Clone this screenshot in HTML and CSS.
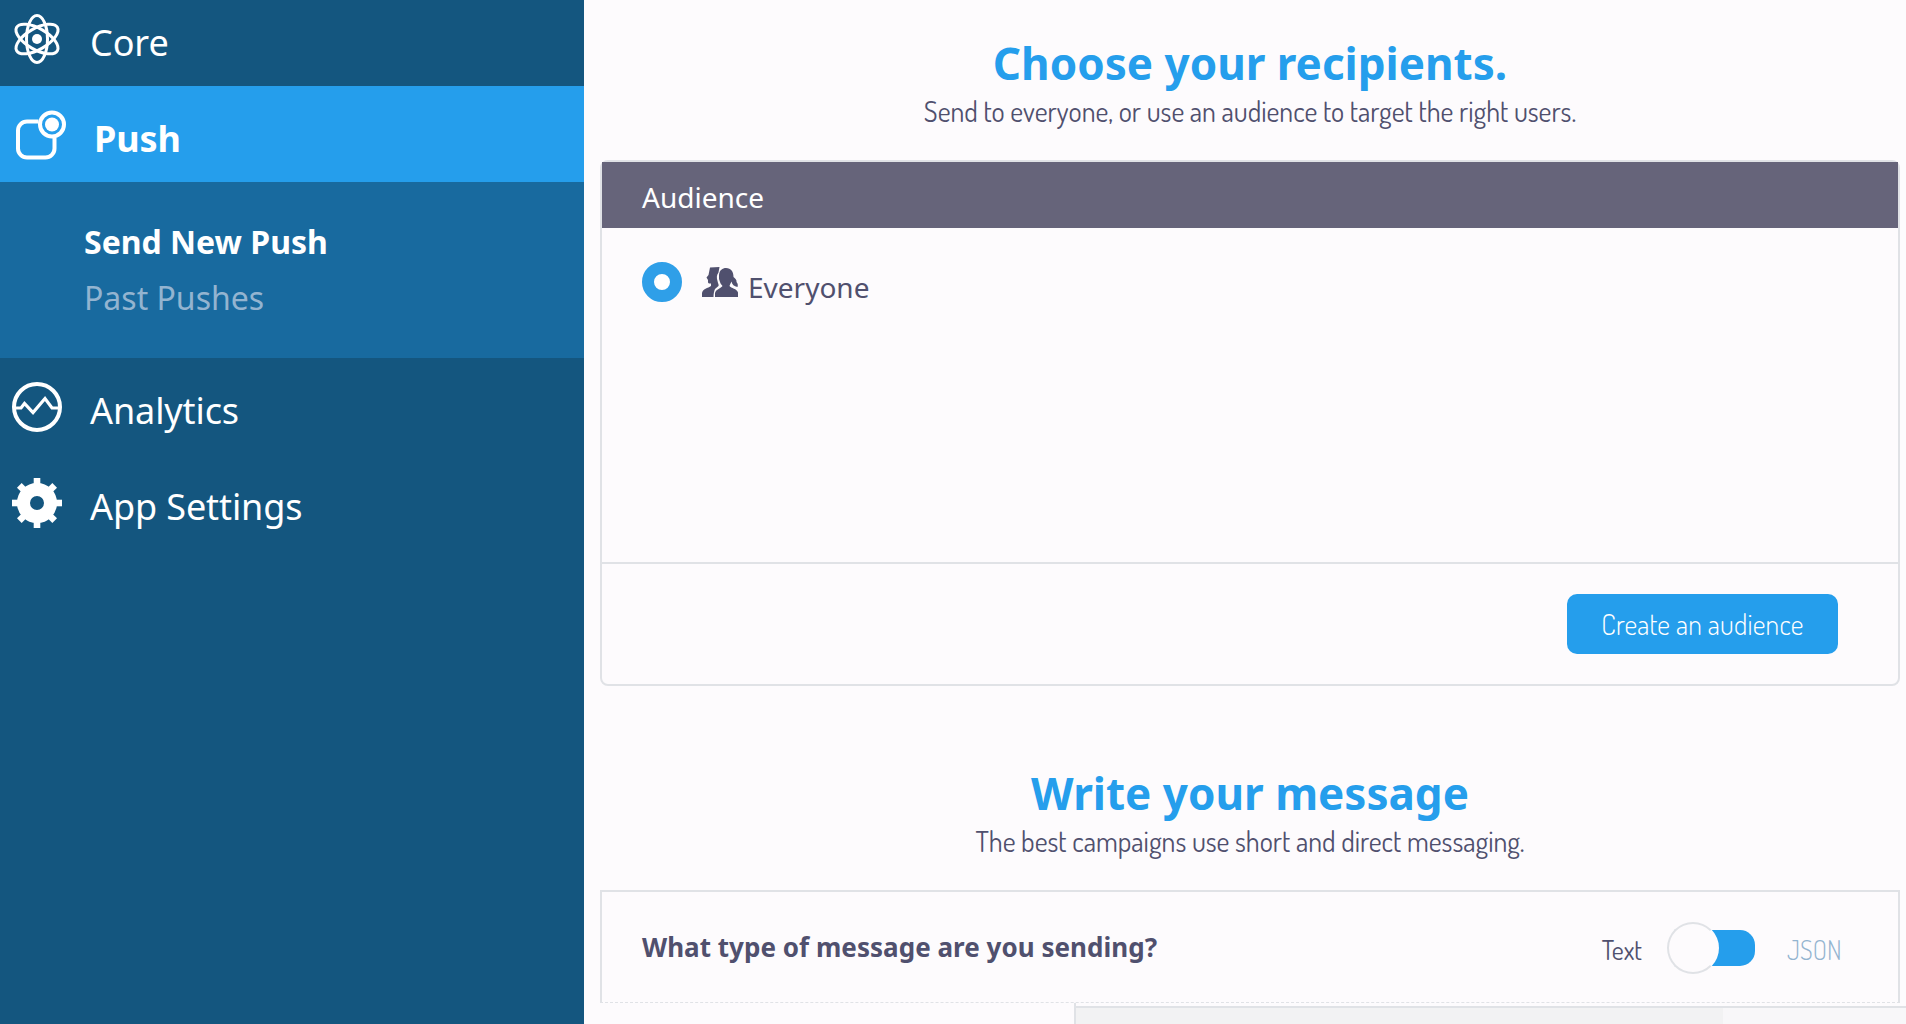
FILE: index.html
```html
<!DOCTYPE html>
<html lang="en">
<head>
<meta charset="utf-8">
<title>Send New Push</title>
<link rel="stylesheet" href="styles.css">
</head>
<body>
<nav class="sidebar">
  <a class="nav-item first">
    <svg class="nav-icon" viewBox="-26 -26 52 52" fill="none" stroke="#fff" stroke-width="3">
      <ellipse rx="10.5" ry="23.5"/>
      <ellipse rx="10.5" ry="23.5" transform="rotate(60)"/>
      <ellipse rx="10.5" ry="23.5" transform="rotate(-60)"/>
      <circle r="5" fill="#fff" stroke="none"/>
    </svg>
    <span>Core</span>
  </a>
  <a class="nav-item active">
    <svg class="nav-icon" viewBox="0 0 52 52" fill="none" stroke="#fff" stroke-width="4">
      <path d="M27.500 12.500H16a9 9 0 0 0-9 9v18a9 9 0 0 0 9 9H34.500a9 9 0 0 0 9-9V28.500"/>
      <circle cx="41" cy="15.500" r="12"/>
      <circle cx="41" cy="15.500" r="7" fill="#fff" stroke="none"/>
    </svg>
    <span>Push</span>
  </a>
  <div class="subnav">
    <a class="current">Send New Push</a>
    <a>Past Pushes</a>
  </div>
  <a class="nav-item">
    <svg class="nav-icon" viewBox="-26 -26 52 52" fill="none" stroke="#fff" stroke-width="4">
      <circle r="23"/>
      <path d="M-23 1H-16L-12.500-3.500L-4 5.500L8-8.500L15 1H23" stroke-width="3.200"/>
    </svg>
    <span>Analytics</span>
  </a>
  <a class="nav-item">
    <svg class="nav-icon" viewBox="-26 -26 52 52" fill="#fff">
      <circle r="13.500" fill="none" stroke="#fff" stroke-width="13"/>
      <rect x="-3.300" y="-25" width="6.600" height="8"/>
      <rect x="-3.300" y="-25" width="6.600" height="8" transform="rotate(45)"/>
      <rect x="-3.300" y="-25" width="6.600" height="8" transform="rotate(90)"/>
      <rect x="-3.300" y="-25" width="6.600" height="8" transform="rotate(135)"/>
      <rect x="-3.300" y="-25" width="6.600" height="8" transform="rotate(180)"/>
      <rect x="-3.300" y="-25" width="6.600" height="8" transform="rotate(225)"/>
      <rect x="-3.300" y="-25" width="6.600" height="8" transform="rotate(270)"/>
      <rect x="-3.300" y="-25" width="6.600" height="8" transform="rotate(315)"/>
    </svg>
    <span>App Settings</span>
  </a>
</nav>
<main class="content">
  <section class="intro">
    <h1>Choose your recipients.</h1>
    <p>Send to everyone, or use an audience to target the right users.</p>
  </section>
  <section class="card">
    <header class="card-head">Audience</header>
    <div class="card-body">
      <span class="radio"></span>
      <svg class="people" viewBox="0 0 36 30" fill="#50506e">
        <path d="M8 0.500L17.500 0L16.500 5.500C14.500 8 14.500 11 15.500 14C16 17 17 17.500 16.500 19L13 22C12 24 11.500 27 11.500 30H0V26C0.500 22 6 21 9 19V16.500C5.500 17 6 15 6 13L4.500 10.500L6.500 8Z"/>
        <path d="M17 8C17.500 3 20.500 1 24 1C29 1 31.500 4.500 31.500 10C33.500 12 35 13 34.500 15C36 17 36 18 35.500 20C32 19.500 30 17.500 29.500 14.500C29 16 28 17 27.500 19C29 21.500 35 21.500 36 25.500V30H13V26C14 22 19 21.500 20.500 19C19.500 17.500 18.500 17 18 15Q16.500 12 17 8Z"/>
      </svg>
      <span class="everyone">Everyone</span>
    </div>
    <footer class="card-foot"><button class="button">Create an audience</button></footer>
  </section>
  <section class="intro second">
    <h1>Write your message</h1>
    <p>The best campaigns use short and direct messaging.</p>
  </section>
  <section class="type-card">
    <strong>What type of message are you sending?</strong>
    <span class="label-text">Text</span>
    <span class="toggle"><span class="knob"></span></span>
    <span class="label-json">JSON</span>
  </section>
  <section class="preview"><div class="preview-side"></div></section>
</main>
</body>
</html>
```
FILE: styles.css
```css
* { box-sizing: border-box; }
body {
  margin: 0;
  display: flex;
  width: 1906px;
  height: 1024px;
  overflow: hidden;
  background: #fdfbfd;
  color: #50506e;
  font-family: "Noto Sans", sans-serif;
}
.sidebar { flex: 0 0 584px; background: #14567f; color: #fff; }
.nav-item { display: flex; align-items: center; height: 96px; padding: 2px 0 0 11px; font-size: 36px; }
.nav-item.first { margin-top: -10px; }
.nav-item span { margin-left: 27px; padding-top: 8px; line-height: 50px; letter-spacing: -0.1px; }
.nav-item.active { background: #259eec; font-weight: 700; }
.nav-item.active span { margin-left: 31px; }
.nav-icon { width: 52px; height: 52px; flex: none; overflow: visible; }
.subnav { height: 176px; padding: 32px 0 0 84px; background: #186a9f; }
.subnav a { display: block; font-size: 32px; line-height: 56px; color: #93b4d0; }
.subnav .current { color: #fff; font-weight: 700; }
.content { flex: 1; padding: 33px 6px 0 16px; }
.intro { height: 127px; text-align: center; }
.intro.second { margin-top: 77px; }
h1 { margin: 0; color: #259eec; font-size: 44px; line-height: 60px; }
.intro p { margin: -2px 0 0; font-size: 28px; line-height: 40px; font-weight: 400; }
.intro p, .button, .label-text, .label-json { font-family: Dosis, "Noto Sans CJK JP", sans-serif; }
.card { height: 526px; border: 2px solid #e0e2e6; border-radius: 8px; display: flex; flex-direction: column; }
.card-head { height: 66px; padding: 12px 0 0 40px; background: #66647a; color: #fff; font-size: 28px; line-height: 46px; }
.card-body { height: 334px; display: flex; align-items: flex-start; padding: 34px 40px 0; }
.radio { width: 40px; height: 40px; border: 12px solid #2f9fe8; border-radius: 50%; background: #fff; }
.people { width: 36px; height: 30px; margin: 5px 10px 0 20px; }
.everyone { padding-top: 5px; font-size: 28px; line-height: 40px; }
.card-foot { flex: 1; display: flex; justify-content: flex-end; padding: 30px 60px 0 0; border-top: 2px solid #e0e2e6; }
.button { width: 271px; height: 60px; padding: 0 0 1px; border: 0; border-radius: 10px; background: #259eec; color: #fff; font-size: 28px; font-weight: 300; letter-spacing: 0.2px; }
.type-card { display: flex; align-items: flex-start; height: 113px; padding-left: 40px; border: 2px solid #e0e2e6; border-bottom: 1px dashed #e0e2e6; }
.type-card strong { flex: 1; padding-top: 35px; font-size: 26px; line-height: 40px; letter-spacing: 0.03px; }
.label-text, .label-json { padding-top: 38px; font-size: 26px; line-height: 40px; }
.toggle { display: flex; width: 88px; height: 52px; margin: 30px 32px 0 25px; align-items: center; }
.toggle::after { content: ""; width: 58px; height: 36px; margin-left: -22px; background: #259eec; border-radius: 0 15px 15px 0; }
.knob { flex: none; width: 52px; height: 52px; z-index: 1; border: 2px solid #e0e2e6; border-right-color: #fdfbfd; border-radius: 50%; background: #fdfbfd; }
.label-json { width: 111px; color: #93b4d0; font-weight: 300; }
.preview { height: 21px; margin: 0 -6px 0 474px; padding-top: 3px; border-left: 2px solid #e0e2e6; }
.preview-side { height: 18px; border-top: 2px solid #e0e2e6; background: linear-gradient(90deg, #f2f2f3 647px, #f8f7f9 647px); }
```
